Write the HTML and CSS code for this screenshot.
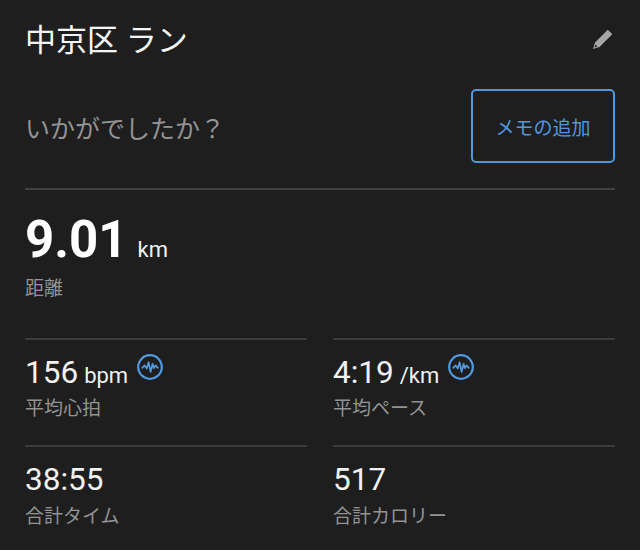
FILE: index.html
```html
<!DOCTYPE html>
<html lang="ja">
<head>
  <meta charset="UTF-8" />
  <meta name="viewport" content="width=device-width, initial-scale=1.0" />
  <title>中京区 ラン</title>
  <link rel="stylesheet" href="styles.css">
</head>
<body>
  <header class="title-row">
    <h1 class="title">中京区 ラン</h1>
    <svg class="edit-icon" viewBox="0 0 22 22" width="22" height="22">
      <path d="M1 21 L3 14.5 L15.8 1.7 L20.3 6.2 L7.5 19 Z M2.6 19.4 L5.4 18.5 L3.5 16.6 Z" fill-rule="evenodd" />
    </svg>
  </header>

  <section class="memo-row">
    <span class="memo-question">いかがでしたか？</span>
    <button class="memo-btn">メモの追加</button>
  </section>

  <section class="distance">
    <div class="distance-value">
      <span class="big-number">9.01</span>
      <span class="big-unit">km</span>
    </div>
    <div class="stat-label">距離</div>
  </section>

  <section class="stat-grid">
    <div class="stat">
      <div class="stat-value">
        <span class="number">156</span>
        <span class="unit">bpm</span>
        <svg class="pulse-icon" viewBox="0 0 26 26" width="26" height="26">
          <circle cx="13" cy="13" r="11.8" />
          <path d="M4.8 14.4 L7.6 11.4 L9.8 14.6 L11.6 8.2 L13.6 18 L15.6 9.8 L17 14.2 L18.6 11.4 L21.2 14.4" />
        </svg>
      </div>
      <div class="stat-label">平均心拍</div>
    </div>
    <div class="stat">
      <div class="stat-value">
        <span class="number">4:19</span>
        <span class="unit">/km</span>
        <svg class="pulse-icon" viewBox="0 0 26 26" width="26" height="26">
          <circle cx="13" cy="13" r="11.8" />
          <path d="M4.8 14.4 L7.6 11.4 L9.8 14.6 L11.6 8.2 L13.6 18 L15.6 9.8 L17 14.2 L18.6 11.4 L21.2 14.4" />
        </svg>
      </div>
      <div class="stat-label">平均ペース</div>
    </div>
    <div class="stat">
      <div class="stat-value">
        <span class="number">38:55</span>
      </div>
      <div class="stat-label">合計タイム</div>
    </div>
    <div class="stat">
      <div class="stat-value">
        <span class="number">517</span>
      </div>
      <div class="stat-label">合計カロリー</div>
    </div>
  </section>
</body>
</html>
```

FILE: styles.css
```css
html, body {
  margin: 0;
  padding: 0;
  overflow: hidden;
  background: #1e1e1e;
  font-family: "Roboto", "Noto Sans CJK JP", sans-serif;
}
body {
  padding: 0 25px;
  height: 550px;
  box-sizing: border-box;
}
.title-row {
  display: flex;
  justify-content: space-between;
  align-items: center;
  height: 78px;
}
.title {
  margin: 0 0 4px;
  font-size: 31px;
  font-weight: 400;
  color: #f5f5f5;
}
.edit-icon {
  fill: #a6a6a6;
  margin-right: 1px;
}
.memo-row {
  display: flex;
  justify-content: space-between;
  align-items: center;
  height: 98px;
  padding-bottom: 12px;
  border-bottom: 2px solid #424242;
}
.memo-question {
  font-size: 25px;
  color: #939393;
}
.memo-btn {
  width: 144px;
  height: 74px;
  margin-bottom: 2px;
  background: transparent;
  border: 2px solid #5197db;
  border-radius: 5px;
  color: #5197db;
  font-family: inherit;
  font-size: 19px;
  padding: 0;
}
.distance {
  padding-top: 16px;
  height: 132px;
}
.distance-value {
  display: flex;
  align-items: baseline;
  gap: 10px;
  height: 70px;
}
.big-number {
  font-size: 51px;
  font-weight: 700;
  color: #fff;
  line-height: 68px;
}
.big-unit {
  font-size: 22px;
  color: #f2f2f2;
}
.stat-label {
  font-size: 19px;
  line-height: 26px;
  color: #939393;
}
.stat-grid {
  display: grid;
  grid-template-columns: 282px 282px;
  column-gap: 26px;
  row-gap: 0;
}
.stat {
  border-top: 2px solid #3c3c3c;
  height: 107px;
  box-sizing: border-box;
  padding-top: 13px;
}
.stat:nth-child(n+3) {
  height: 105px;
}
.stat:nth-child(n+3) .stat-value {
  height: 44px;
}
.stat-value {
  display: flex;
  align-items: baseline;
  gap: 6px;
  height: 43px;
  color: #f2f2f2;
}
.number {
  font-size: 31.5px;
  line-height: 40px;
}
.unit {
  font-size: 22px;
}
.pulse-icon {
  align-self: flex-start;
  margin-top: 1px;
  margin-left: 3px;
  fill: none;
  stroke: #4f9ae0;
  stroke-width: 2.2;
}
.pulse-icon path {
  stroke-width: 1.7;
  stroke-linejoin: round;
}
```
